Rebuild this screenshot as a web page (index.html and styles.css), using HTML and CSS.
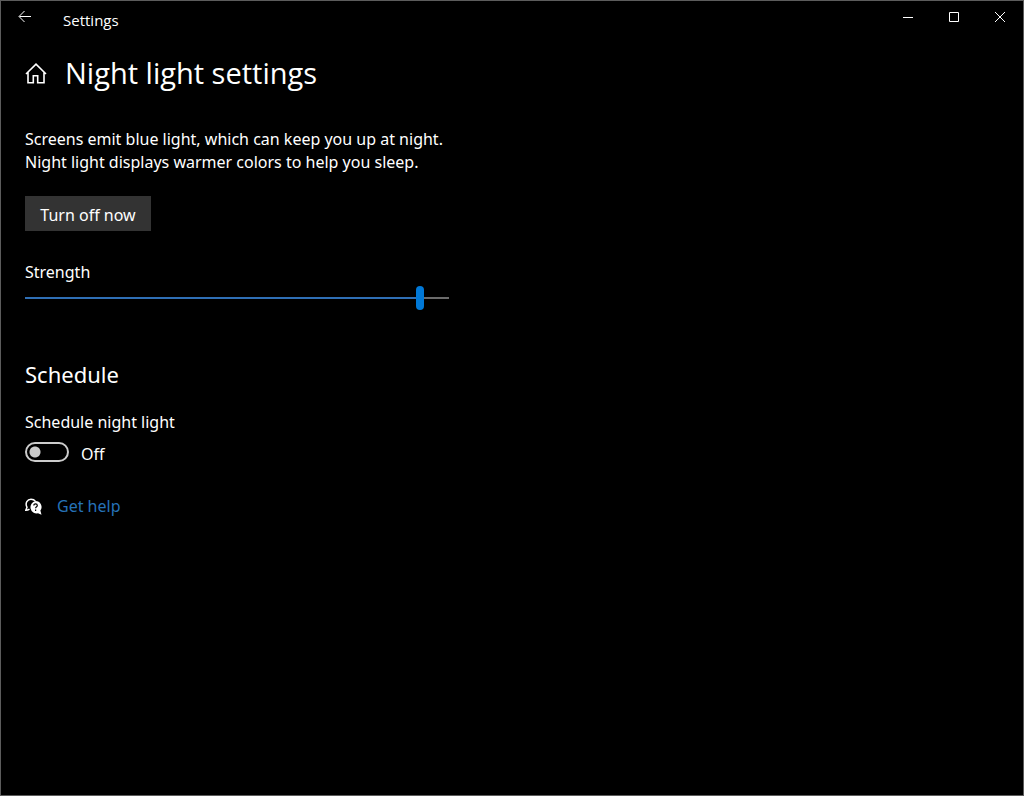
FILE: index.html
```html
<!DOCTYPE html>
<html lang="en">
<head>
<meta charset="utf-8">
<title>Settings</title>
<link rel="stylesheet" href="styles.css">
</head>
<body>
<div class="window">
  <header class="titlebar">
    <button class="back" type="button" aria-label="Back">
      <svg width="14" height="14" viewBox="0 0 14 14"><path d="M13 6.500H1.500M6.500 1L1 6.500l5.500 5.500"/></svg>
    </button>
    <span class="app-name">Settings</span>
    <div class="controls">
      <button class="control" type="button" aria-label="Minimize">
        <svg width="12" height="12" viewBox="0 0 12 12"><path d="M1 6.500h10"/></svg>
      </button>
      <button class="control" type="button" aria-label="Maximize">
        <svg width="12" height="12" viewBox="0 0 12 12"><path d="M1.500 1.500h9v9h-9z"/></svg>
      </button>
      <button class="control" type="button" aria-label="Close">
        <svg width="12" height="12" viewBox="0 0 12 12"><path d="M1 1l10 10M11 1L1 11"/></svg>
      </button>
    </div>
  </header>
  <main class="page">
    <div class="page-head">
      <button class="home" type="button" aria-label="Home">
        <svg width="22" height="22" viewBox="0 0 22 22"><path d="M1 12L11 2.200 21 12M3 10.500v10.300h5.300v-7h4.400v7H19V10.500"/></svg>
      </button>
      <h1 class="title">Night light settings</h1>
    </div>
    <p class="intro">Screens emit blue light, which can keep you up at night.<br>Night light displays warmer colors to help you sleep.</p>
    <button class="action" type="button">Turn off now</button>
    <div class="field">
      <label class="label" for="strength">Strength</label>
      <input class="slider" id="strength" type="range" min="0" max="100" value="94">
    </div>
    <h2 class="section">Schedule</h2>
    <label class="label" for="schedule">Schedule night light</label>
    <div class="switch-row">
      <input class="switch" id="schedule" type="checkbox" role="switch">
      <label class="state" for="schedule">Off</label>
    </div>
    <div class="help">
      <svg class="help-icon" width="18" height="18" viewBox="0 0 18 18" aria-hidden="true">
        <path class="bubble-line" d="M4.500 11.200C3.300 12 2 12.300.8 12.300L2 9.300C-.3 5 2.500 1.200 6 1.200c2 0 3.500.8 4.300 2"/>
        <path class="bubble" d="M10.500 3a6 6 0 0 1 4.900 9.500L16.500 16.800l-3.500-1.500A6.200 6.200 0 1 1 10.500 3z"/>
        <path class="mark" d="M8.800 7.500c0-2.200 3.500-2.200 3.500 0 0 1.300-1.700 1.300-1.700 2.800M10.600 11.500v1.400"/>
      </svg>
      <a class="link" href="#help">Get help</a>
    </div>
  </main>
</div>
</body>
</html>
```
FILE: styles.css
```css
* {
  box-sizing: border-box;
}

body {
  margin: 0;
  background: #000;
  color: #fff;
  font: 16px/23px "Noto Sans", "Open Sans", sans-serif;
}

.window {
  min-height: 100vh;
  border: 1px solid #5c5c5c;
}

button {
  padding: 0;
  border: 0;
  background: none;
  color: inherit;
  font: inherit;
}

svg {
  display: block;
  fill: none;
  stroke: #fff;
}

.titlebar {
  display: flex;
  align-items: flex-start;
  height: 40px;
}

.back {
  display: grid;
  place-items: center;
  width: 48px;
  height: 32px;
}

.app-name {
  padding: 8px 0 0 14px;
  font-family: "Open Sans", "Noto Sans", sans-serif;
  font-size: 15px;
}

.controls {
  display: flex;
  margin-left: auto;
}

.control {
  display: grid;
  place-items: center;
  width: 46px;
  height: 32px;
}

.page {
  padding: 8px 24px;
}

.page-head {
  display: flex;
  align-items: center;
  gap: 18px;
}

.home svg {
  stroke-width: 1.6;
}

.title {
  margin: 0;
  font-family: "Open Sans", "Noto Sans", sans-serif;
  font-size: 29px;
  font-weight: 400;
  line-height: 48px;
}

.intro {
  margin: 31px 0 22px;
}

.action {
  display: block;
  min-width: 126px;
  height: 35px;
  padding: 3px 14px 0;
  background: #333;
}

.field {
  max-width: 424px;
  margin-top: 30px;
}

.label {
  display: block;
}

.slider {
  display: block;
  width: 100%;
  height: 24px;
  margin: 2px 0 0;
  appearance: none;
  background: linear-gradient(to right, #2f6fb5 93%, #6b6b6b 93%) center / 100% 2px no-repeat;
}

.slider::-webkit-slider-thumb {
  appearance: none;
  width: 8px;
  height: 24px;
  border-radius: 4px;
  background: #0078d7;
}

.section {
  margin: 48px 0 21px;
  font-size: 22px;
  font-weight: 400;
  line-height: 32px;
}

.switch-row {
  display: flex;
  align-items: flex-start;
  gap: 12px;
  margin-top: 8px;
}

.state {
  padding-top: 1px;
}

.switch {
  width: 44px;
  height: 20px;
  margin: 0;
  appearance: none;
  border: 2px solid #ccc;
  border-radius: 10px;
  background: radial-gradient(circle at 8px 8px, #ccc 5px, transparent 6px);
}

.help {
  display: flex;
  align-items: center;
  gap: 14px;
  margin-top: 29px;
}

.bubble-line {
  stroke-width: 1.5;
}

.bubble {
  fill: #fff;
  stroke: none;
}

.mark {
  stroke: #000;
  stroke-width: 1.2;
}

.link {
  color: #2672b8;
  text-decoration: none;
}
```
